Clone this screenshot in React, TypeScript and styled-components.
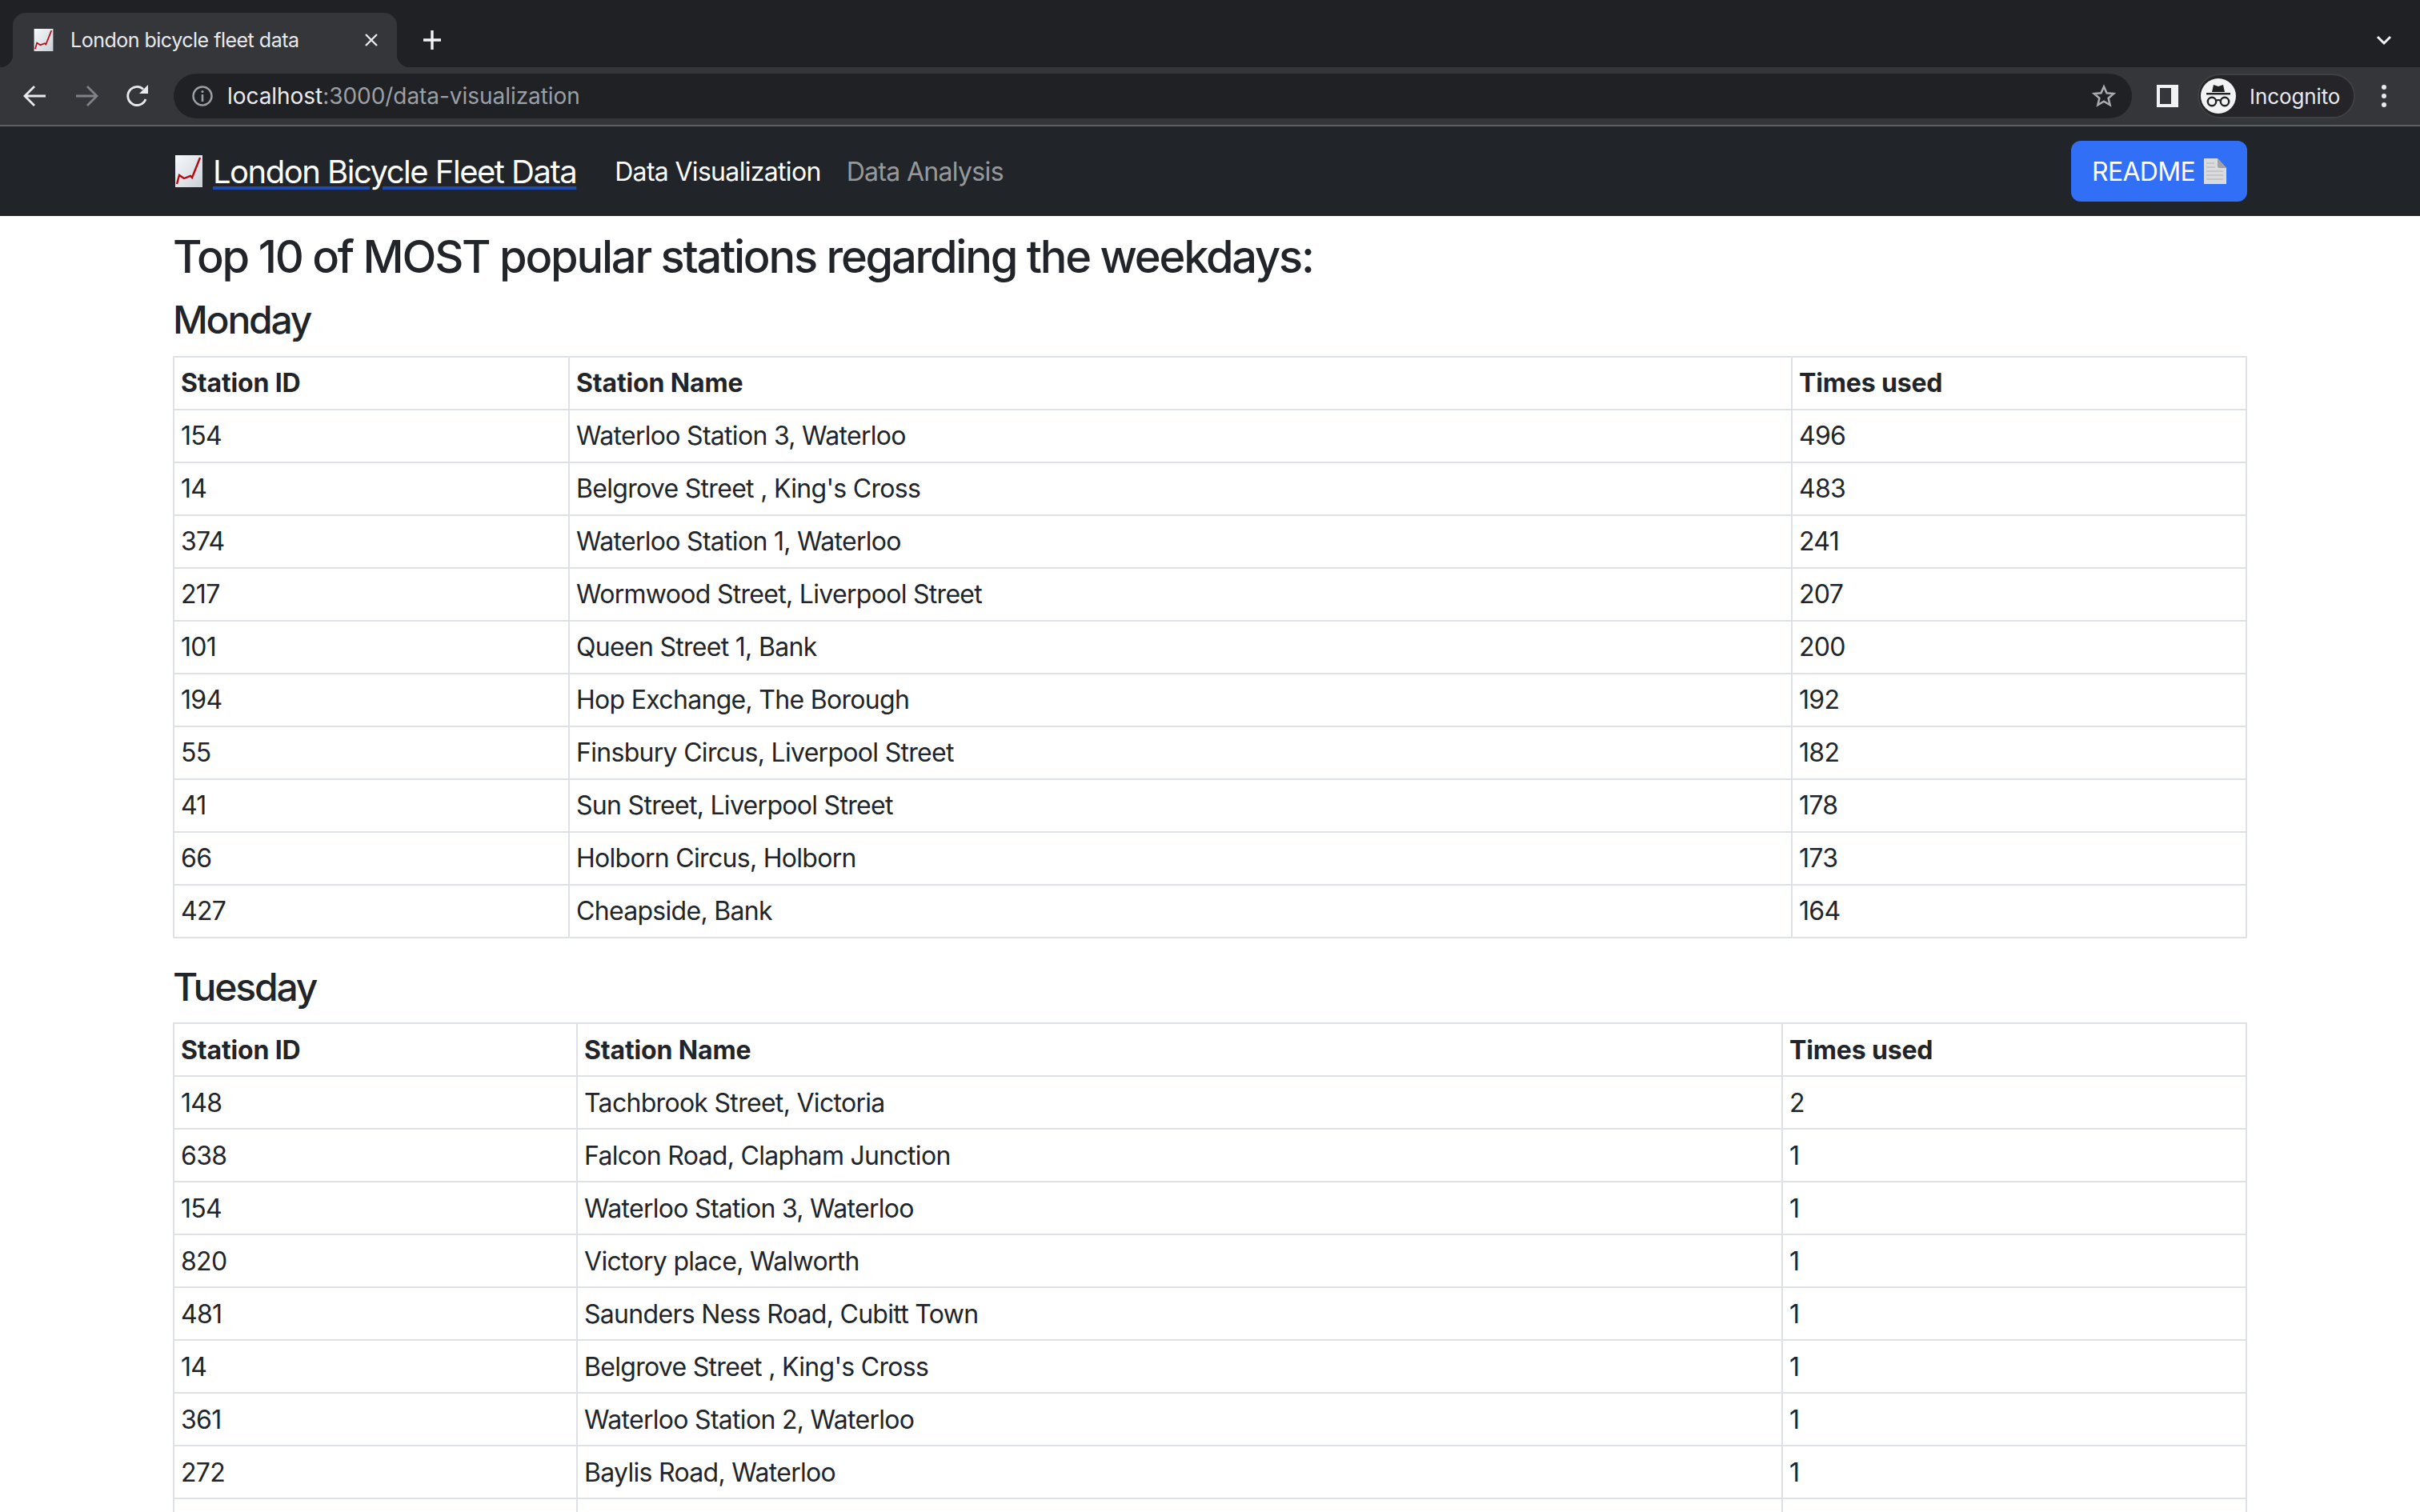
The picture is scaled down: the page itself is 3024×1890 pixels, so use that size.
import React from 'react';
import styled, { createGlobalStyle } from 'styled-components';

const GlobalStyle = createGlobalStyle`
  html, body { margin: 0; padding: 0; background: #fff; }
  body {
    width: 3024px;
    height: 1890px;
    overflow: hidden;
    font-family: Inter, "Liberation Sans", sans-serif;
    color: #212529;
  }
  * { box-sizing: border-box; }
`;

const TabStrip = styled.div`
  height: 84px;
  background: #202124;
  display: flex;
  align-items: flex-end;
  padding-left: 16px;
`;
const Tab = styled.div`
  position: relative;
  width: 480px;
  height: 68px;
  background: #35363a;
  border-radius: 16px 16px 0 0;
  display: flex;
  align-items: center;
  padding-left: 26px;
  &::before, &::after {
    content: '';
    position: absolute;
    bottom: 0;
    width: 16px;
    height: 16px;
  }
  &::before {
    left: -16px;
    background: radial-gradient(circle at 0 0, #202124 16px, #35363a 16.5px);
  }
  &::after {
    right: -16px;
    background: radial-gradient(circle at 100% 0, #202124 16px, #35363a 16.5px);
  }
`;
const TabTitle = styled.span`
  margin-left: 21px;
  flex: 1;
  font-size: 25px;
  letter-spacing: -0.5px;
  color: #e8eaed;
`;
const TabClose = styled.span`
  display: flex;
  margin-right: 23px;
`;
const NewTab = styled.span`
  display: flex;
  margin: 0 0 16px 32px;
  align-self: flex-end;
  height: 36px;
`;
const StripEnd = styled.span`
  margin-left: auto;
  margin-right: 35px;
  margin-bottom: 27px;
  display: flex;
`;
const Toolbar = styled.div`
  height: 74px;
  background: #35363a;
  border-bottom: 2px solid #5f6063;
  display: flex;
  align-items: center;
  padding: 0 0 0 29px;
`;
const NavIcon = styled.span`
  width: 64px;
  display: flex;
`;
const Omnibox = styled.div`
  margin-left: -4px;
  width: 2447px;
  height: 56px;
  border-radius: 28px;
  background: #202124;
  display: flex;
  align-items: center;
  padding: 0 20px 0 23px;
`;
const Url = styled.span`
  margin-left: 18px;
  flex: 1;
  font-size: 28px;
  letter-spacing: -0.05px;
  color: #9aa0a6;
`;
const UrlHost = styled.span`
  color: #e8eaed;
`;
const PanelIcon = styled.span`
  margin-left: 31px;
  width: 27px;
  height: 28px;
  background: #f1f3f4;
  display: flex;
  padding: 4px 9px 4px 4px;
  &::before {
    content: '';
    flex: 1;
    background: #35363a;
  }
`;
const ProfilePill = styled.div`
  margin-left: 24px;
  width: 197px;
  height: 56px;
  border-radius: 28px;
  border: 2px solid #3f4044;
  background: #252428;
  display: flex;
  align-items: center;
  padding-left: 2px;
`;
const Avatar = styled.span`
  width: 44px;
  height: 44px;
  border-radius: 50%;
  background: #f1f3f4;
  display: flex;
  align-items: center;
  justify-content: center;
`;
const ProfileName = styled.span`
  margin-left: 17px;
  font-size: 26px;
  letter-spacing: -0.1px;
  color: #e8eaed;
`;
const MenuDots = styled.span`
  margin-left: 33px;
  display: flex;
`;

const NavBar = styled.nav`
  height: 112px;
  background: #212529;
  padding: 0 216px;
  display: flex;
  align-items: center;
`;
const Brand = styled.a`
  display: flex;
  align-items: center;
  font-size: 40px;
  letter-spacing: -1.5px;
  color: #fff;
  text-decoration: underline;
  text-decoration-color: #1f4bb0;
  text-decoration-thickness: 4px;
  text-underline-offset: 4px;
`;
const BrandIcon = styled.span`
  display: flex;
  margin: 0 13px 0 3px;
`;
const NavLink = styled.a<{ $active?: boolean }>`
  font-size: 32px;
  letter-spacing: -0.68px;
  margin-left: ${p => (p.$active ? '48px' : '32px')};
  color: ${p => (p.$active ? '#fff' : 'rgba(255,255,255,.55)')};
`;
const ReadmeButton = styled.button`
  margin-left: auto;
  width: 220px;
  height: 76px;
  border: 0;
  border-radius: 12px;
  background: #316ff6;
  color: #fff;
  font: inherit;
  font-size: 32px;
  letter-spacing: -0.7px;
  display: flex;
  align-items: center;
  padding: 0 0 0 26px;
`;
const ReadmeIcon = styled.span`
  display: flex;
  margin-left: 11px;
`;

const Main = styled.main`
  padding: 18px 218px 0 216px;
`;
const Title = styled.h3`
  margin: 0 0 16px;
  font-size: 56px;
  font-weight: 500;
  line-height: 1.2;
  letter-spacing: -2.23px;
`;
const DayTitle = styled.h4`
  margin: 0 0 16px;
  font-size: 48px;
  font-weight: 500;
  line-height: 1.2;
  letter-spacing: -2.2px;
`;
const Table = styled.table`
  width: 100%;
  table-layout: fixed;
  border-collapse: collapse;
  margin-bottom: 32px;
  font-size: 32px;
  letter-spacing: -0.7px;
`;
const Col = styled.col<{ $width: number }>`
  width: ${p => p.$width}px;
`;
const HeadCell = styled.th`
  height: 66px;
  padding: 8px;
  border: 2px solid #dee2e6;
  text-align: left;
  font-weight: 700;
  letter-spacing: -0.15px;
`;
const Cell = styled.td`
  height: 66px;
  padding: 8px;
  border: 2px solid #dee2e6;
`;

const ChartIcon = ({ w, h }: { w: number; h: number }) => (
  <svg width={w} height={h} viewBox="0 0 34 40">
    <defs>
      <linearGradient id="paper" x1="0" y1="0" x2="1" y2="1">
        <stop offset="0" stopColor="#f8fafc" />
        <stop offset="1" stopColor="#c9d0d6" />
      </linearGradient>
    </defs>
    <rect width="34" height="40" fill="url(#paper)" />
    <path d="M2 36 L5 25 L11 29 L19 26 L21 28 L31 3" fill="none" stroke="#b5080f" strokeWidth="2.4" />
  </svg>
);

const DocIcon = () => (
  <svg width="28" height="32" viewBox="0 0 28 32">
    <path d="M0 0 H17 L28 12 V32 H0 Z" fill="#d9dbdc" />
    <path d="M17 0 L28 12 H19 Q17 12 17 9 Z" fill="#a0a2a4" />
    <path d="M3 6 H13 M3 11 H14 M3 16 H24 M3 21 H24 M3 26 H24" stroke="#c4c6c7" strokeWidth="2" />
  </svg>
);

const IncognitoIcon = () => (
  <svg width="32" height="32" viewBox="0 0 32 32" fill="none">
    <path d="M8 11 L10 2 L16 4 L22 2 L24 11 Z" fill="#202124" />
    <rect x="1" y="12" width="30" height="2.4" fill="#202124" />
    <circle cx="8" cy="23" r="5.2" stroke="#202124" strokeWidth="2.4" />
    <circle cx="24" cy="23" r="5.2" stroke="#202124" strokeWidth="2.4" />
    <path d="M13 22 Q16 20 19 22" stroke="#202124" strokeWidth="2.2" />
  </svg>
);

type Row = [number, string, number];

const monday: Row[] = [
  [154, 'Waterloo Station 3, Waterloo', 496],
  [14, "Belgrove Street , King's Cross", 483],
  [374, 'Waterloo Station 1, Waterloo', 241],
  [217, 'Wormwood Street, Liverpool Street', 207],
  [101, 'Queen Street 1, Bank', 200],
  [194, 'Hop Exchange, The Borough', 192],
  [55, 'Finsbury Circus, Liverpool Street', 182],
  [41, 'Sun Street, Liverpool Street', 178],
  [66, 'Holborn Circus, Holborn', 173],
  [427, 'Cheapside, Bank', 164],
];

const tuesday: Row[] = [
  [148, 'Tachbrook Street, Victoria', 2],
  [638, 'Falcon Road, Clapham Junction', 1],
  [154, 'Waterloo Station 3, Waterloo', 1],
  [820, 'Victory place, Walworth', 1],
  [481, 'Saunders Ness Road, Cubitt Town', 1],
  [14, "Belgrove Street , King's Cross", 1],
  [361, 'Waterloo Station 2, Waterloo', 1],
  [272, 'Baylis Road, Waterloo', 1],
];

function StationTable({ rows, widths, openEnded }: { rows: Row[]; widths: number[]; openEnded?: boolean }) {
  return (
    <Table>
      <colgroup>
        {widths.map(w => (
          <Col key={w} $width={w} />
        ))}
      </colgroup>
      <thead>
        <tr>
          <HeadCell>Station ID</HeadCell>
          <HeadCell>Station Name</HeadCell>
          <HeadCell>Times used</HeadCell>
        </tr>
      </thead>
      <tbody>
        {rows.map(([id, name, used]) => (
          <tr key={id}>
            <Cell>{id}</Cell>
            <Cell>{name}</Cell>
            <Cell>{used}</Cell>
          </tr>
        ))}
        {openEnded && (
          <tr>
            <Cell />
            <Cell />
            <Cell />
          </tr>
        )}
      </tbody>
    </Table>
  );
}

export default function App() {
  return (
    <>
      <GlobalStyle />
      <TabStrip>
        <Tab>
          <ChartIcon w={25} h={28} />
          <TabTitle>London bicycle fleet data</TabTitle>
          <TabClose>
            <svg width="18" height="18" viewBox="0 0 18 18">
              <path d="M2 2 L16 16 M16 2 L2 16" stroke="#e8eaed" strokeWidth="2.4" />
            </svg>
          </TabClose>
        </Tab>
        <NewTab>
          <svg width="24" height="36" viewBox="0 0 24 36">
            <path d="M12 6 V30 M1 18 H23" stroke="#f1f3f4" strokeWidth="3.4" />
          </svg>
        </NewTab>
        <StripEnd>
          <svg width="20" height="14" viewBox="0 0 20 14" fill="none">
            <path d="M2 3 L10 11 L18 3" stroke="#f1f3f4" strokeWidth="3" />
          </svg>
        </StripEnd>
      </TabStrip>
      <Toolbar>
        <NavIcon>
          <svg width="30" height="28" viewBox="0 0 30 28" fill="none">
            <path d="M28 14 H3 M14 2 L2 14 L14 26" stroke="#e8eaed" strokeWidth="2.8" />
          </svg>
        </NavIcon>
        <NavIcon>
          <svg width="30" height="28" viewBox="0 0 30 28" fill="none">
            <path d="M2 14 H27 M16 2 L28 14 L16 26" stroke="#7f8286" strokeWidth="2.8" />
          </svg>
        </NavIcon>
        <NavIcon>
          <svg width="30" height="30" viewBox="0 0 30 30" fill="none">
            <path d="M25 19 A11.5 11.5 0 1 1 22 6.5" stroke="#e8eaed" strokeWidth="2.8" />
            <path d="M28 1 V12 H17 Z" fill="#e8eaed" />
          </svg>
        </NavIcon>
        <Omnibox>
          <svg width="26" height="26" viewBox="0 0 26 26" fill="none">
            <circle cx="13" cy="13" r="11.5" stroke="#9aa0a6" strokeWidth="2.4" />
            <path d="M13 11 V20" stroke="#9aa0a6" strokeWidth="2.6" />
            <circle cx="13" cy="7.5" r="1.6" fill="#9aa0a6" />
          </svg>
          <Url>
            <UrlHost>localhost</UrlHost>:3000/data-visualization
          </Url>
          <svg width="30" height="30" viewBox="0 0 24 24" fill="none">
            <path
              d="M12 2.6 L14.8 9 L21.8 9.6 L16.5 14.2 L18.1 21 L12 17.4 L5.9 21 L7.5 14.2 L2.2 9.6 L9.2 9 Z"
              stroke="#a9acb0"
              strokeWidth="2"
            />
          </svg>
        </Omnibox>
        <PanelIcon />
        <ProfilePill>
          <Avatar>
            <IncognitoIcon />
          </Avatar>
          <ProfileName>Incognito</ProfileName>
        </ProfilePill>
        <MenuDots>
          <svg width="6" height="28" viewBox="0 0 6 28">
            <circle cx="3" cy="3" r="3" fill="#e8eaed" />
            <circle cx="3" cy="14" r="3" fill="#e8eaed" />
            <circle cx="3" cy="25" r="3" fill="#e8eaed" />
          </svg>
        </MenuDots>
      </Toolbar>
      <NavBar>
        <BrandIcon>
          <ChartIcon w={34} h={40} />
        </BrandIcon>
        <Brand>London Bicycle Fleet Data</Brand>
        <NavLink $active>Data Visualization</NavLink>
        <NavLink>Data Analysis</NavLink>
        <ReadmeButton>
          README
          <ReadmeIcon>
            <DocIcon />
          </ReadmeIcon>
        </ReadmeButton>
      </NavBar>
      <Main>
        <Title>Top 10 of MOST popular stations regarding the weekdays:</Title>
        <DayTitle>Monday</DayTitle>
        <StationTable rows={monday} widths={[494, 1528, 568]} />
        <DayTitle>Tuesday</DayTitle>
        <StationTable rows={tuesday} widths={[504, 1506, 580]} openEnded />
      </Main>
    </>
  );
}
